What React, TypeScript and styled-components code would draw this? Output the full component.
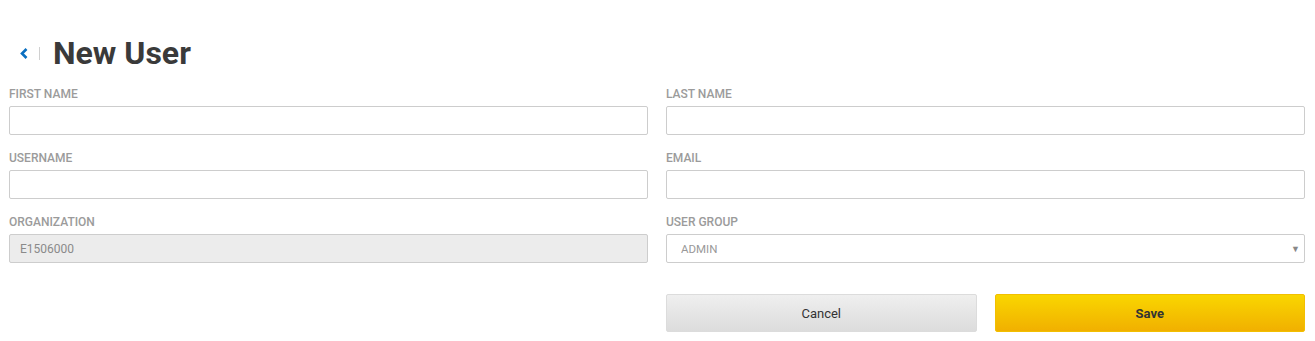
import React from "react";
import styled, { createGlobalStyle } from "styled-components";

const Global = createGlobalStyle`
  html, body { margin: 0; padding: 0; background: #fff; }
  body { font-family: Roboto, "Liberation Sans", Arial, sans-serif; }
  * { box-sizing: border-box; }
`;

const Page = styled.div`
  padding: 37px 10px 0 9px;
`;

const Header = styled.div`
  display: flex;
  align-items: center;
  height: 32px;
  margin-bottom: 18px;
`;

const BackButton = styled.button`
  display: flex;
  align-items: center;
  justify-content: center;
  width: 9px;
  height: 20px;
  margin-left: 10px;
  padding: 0;
  border: none;
  background: none;
  color: #0b6fc0;
  cursor: pointer;
`;

const Divider = styled.span`
  width: 1px;
  height: 13px;
  background: #d0d0d0;
  margin: 0 13px 0 11px;
`;

const Title = styled.h1`
  margin: 0;
  font-family: Roboto, "Liberation Sans", Arial, sans-serif;
  font-weight: 700;
  font-size: 32px;
  line-height: 32px;
  color: #3a3a3a;
`;

const Grid = styled.div`
  display: grid;
  grid-template-columns: 1fr 1fr;
  column-gap: 18px;
  row-gap: 16px;
`;

const Field = styled.div`
  display: flex;
  flex-direction: column;
`;

const Label = styled.label`
  font-size: 12px;
  line-height: 14px;
  font-weight: 500;
  color: #9b9b9b;
  text-transform: uppercase;
  margin-bottom: 5px;
`;

const Input = styled.input<{ $disabled?: boolean }>`
  height: 29px;
  width: 100%;
  border: 1px solid #cdcdcd;
  border-radius: 2px;
  padding: 0 10px;
  font-family: Roboto, "Liberation Sans", Arial, sans-serif;
  font-size: 12px;
  color: #8a8a8a;
  background: ${(p) => (p.$disabled ? "#ececec" : "#fff")};
  outline: none;
`;

const SelectWrap = styled.div`
  position: relative;
`;

const Select = styled.select`
  appearance: none;
  height: 29px;
  width: 100%;
  border: 1px solid #cdcdcd;
  border-radius: 2px;
  padding: 0 14px;
  font-family: Roboto, "Liberation Sans", Arial, sans-serif;
  font-size: 11.5px;
  color: #999;
  background: #fff;
  outline: none;
`;

const Caret = styled.span`
  position: absolute;
  right: 5px;
  top: 50%;
  transform: translateY(-50%);
  font-size: 9px;
  color: #888;
  pointer-events: none;
`;

const Actions = styled.div`
  display: grid;
  grid-template-columns: 1fr 1fr;
  column-gap: 18px;
  margin-top: 15px;
`;

const Button = styled.button<{ $primary?: boolean }>`
  height: 38px;
  border-radius: 2px;
  font-family: Roboto, "Liberation Sans", Arial, sans-serif;
  font-size: 13px;
  font-weight: ${(p) => (p.$primary ? 700 : 400)};
  color: #333;
  cursor: pointer;
  border: 1px solid ${(p) => (p.$primary ? "#f2bf00" : "#dcdcdc")};
  background: ${(p) =>
    p.$primary
      ? "linear-gradient(#f9d600, #f1b000)"
      : "linear-gradient(#efefef, #dcdcdc)"};
`;

export default function App() {
  return (
    <>
      <Global />
      <Page>
        <Header>
          <BackButton aria-label="Back">
            <svg width="8" height="11" viewBox="0 0 8 11">
              <path d="M6.5 1 L2 5.5 L6.5 10" stroke="currentColor" strokeWidth="2.6" fill="none" />
            </svg>
          </BackButton>
          <Divider />
          <Title>New User</Title>
        </Header>
        <Grid>
          <Field>
            <Label>First Name</Label>
            <Input />
          </Field>
          <Field>
            <Label>Last Name</Label>
            <Input />
          </Field>
          <Field>
            <Label>Username</Label>
            <Input />
          </Field>
          <Field>
            <Label>Email</Label>
            <Input />
          </Field>
          <Field>
            <Label>Organization</Label>
            <Input $disabled disabled defaultValue="E1506000" />
          </Field>
          <Field>
            <Label>User Group</Label>
            <SelectWrap>
              <Select defaultValue="ADMIN">
                <option>ADMIN</option>
              </Select>
              <Caret>▼</Caret>
            </SelectWrap>
          </Field>
          <div />
          <Actions>
            <Button>Cancel</Button>
            <Button $primary>Save</Button>
          </Actions>
        </Grid>
      </Page>
    </>
  );
}
